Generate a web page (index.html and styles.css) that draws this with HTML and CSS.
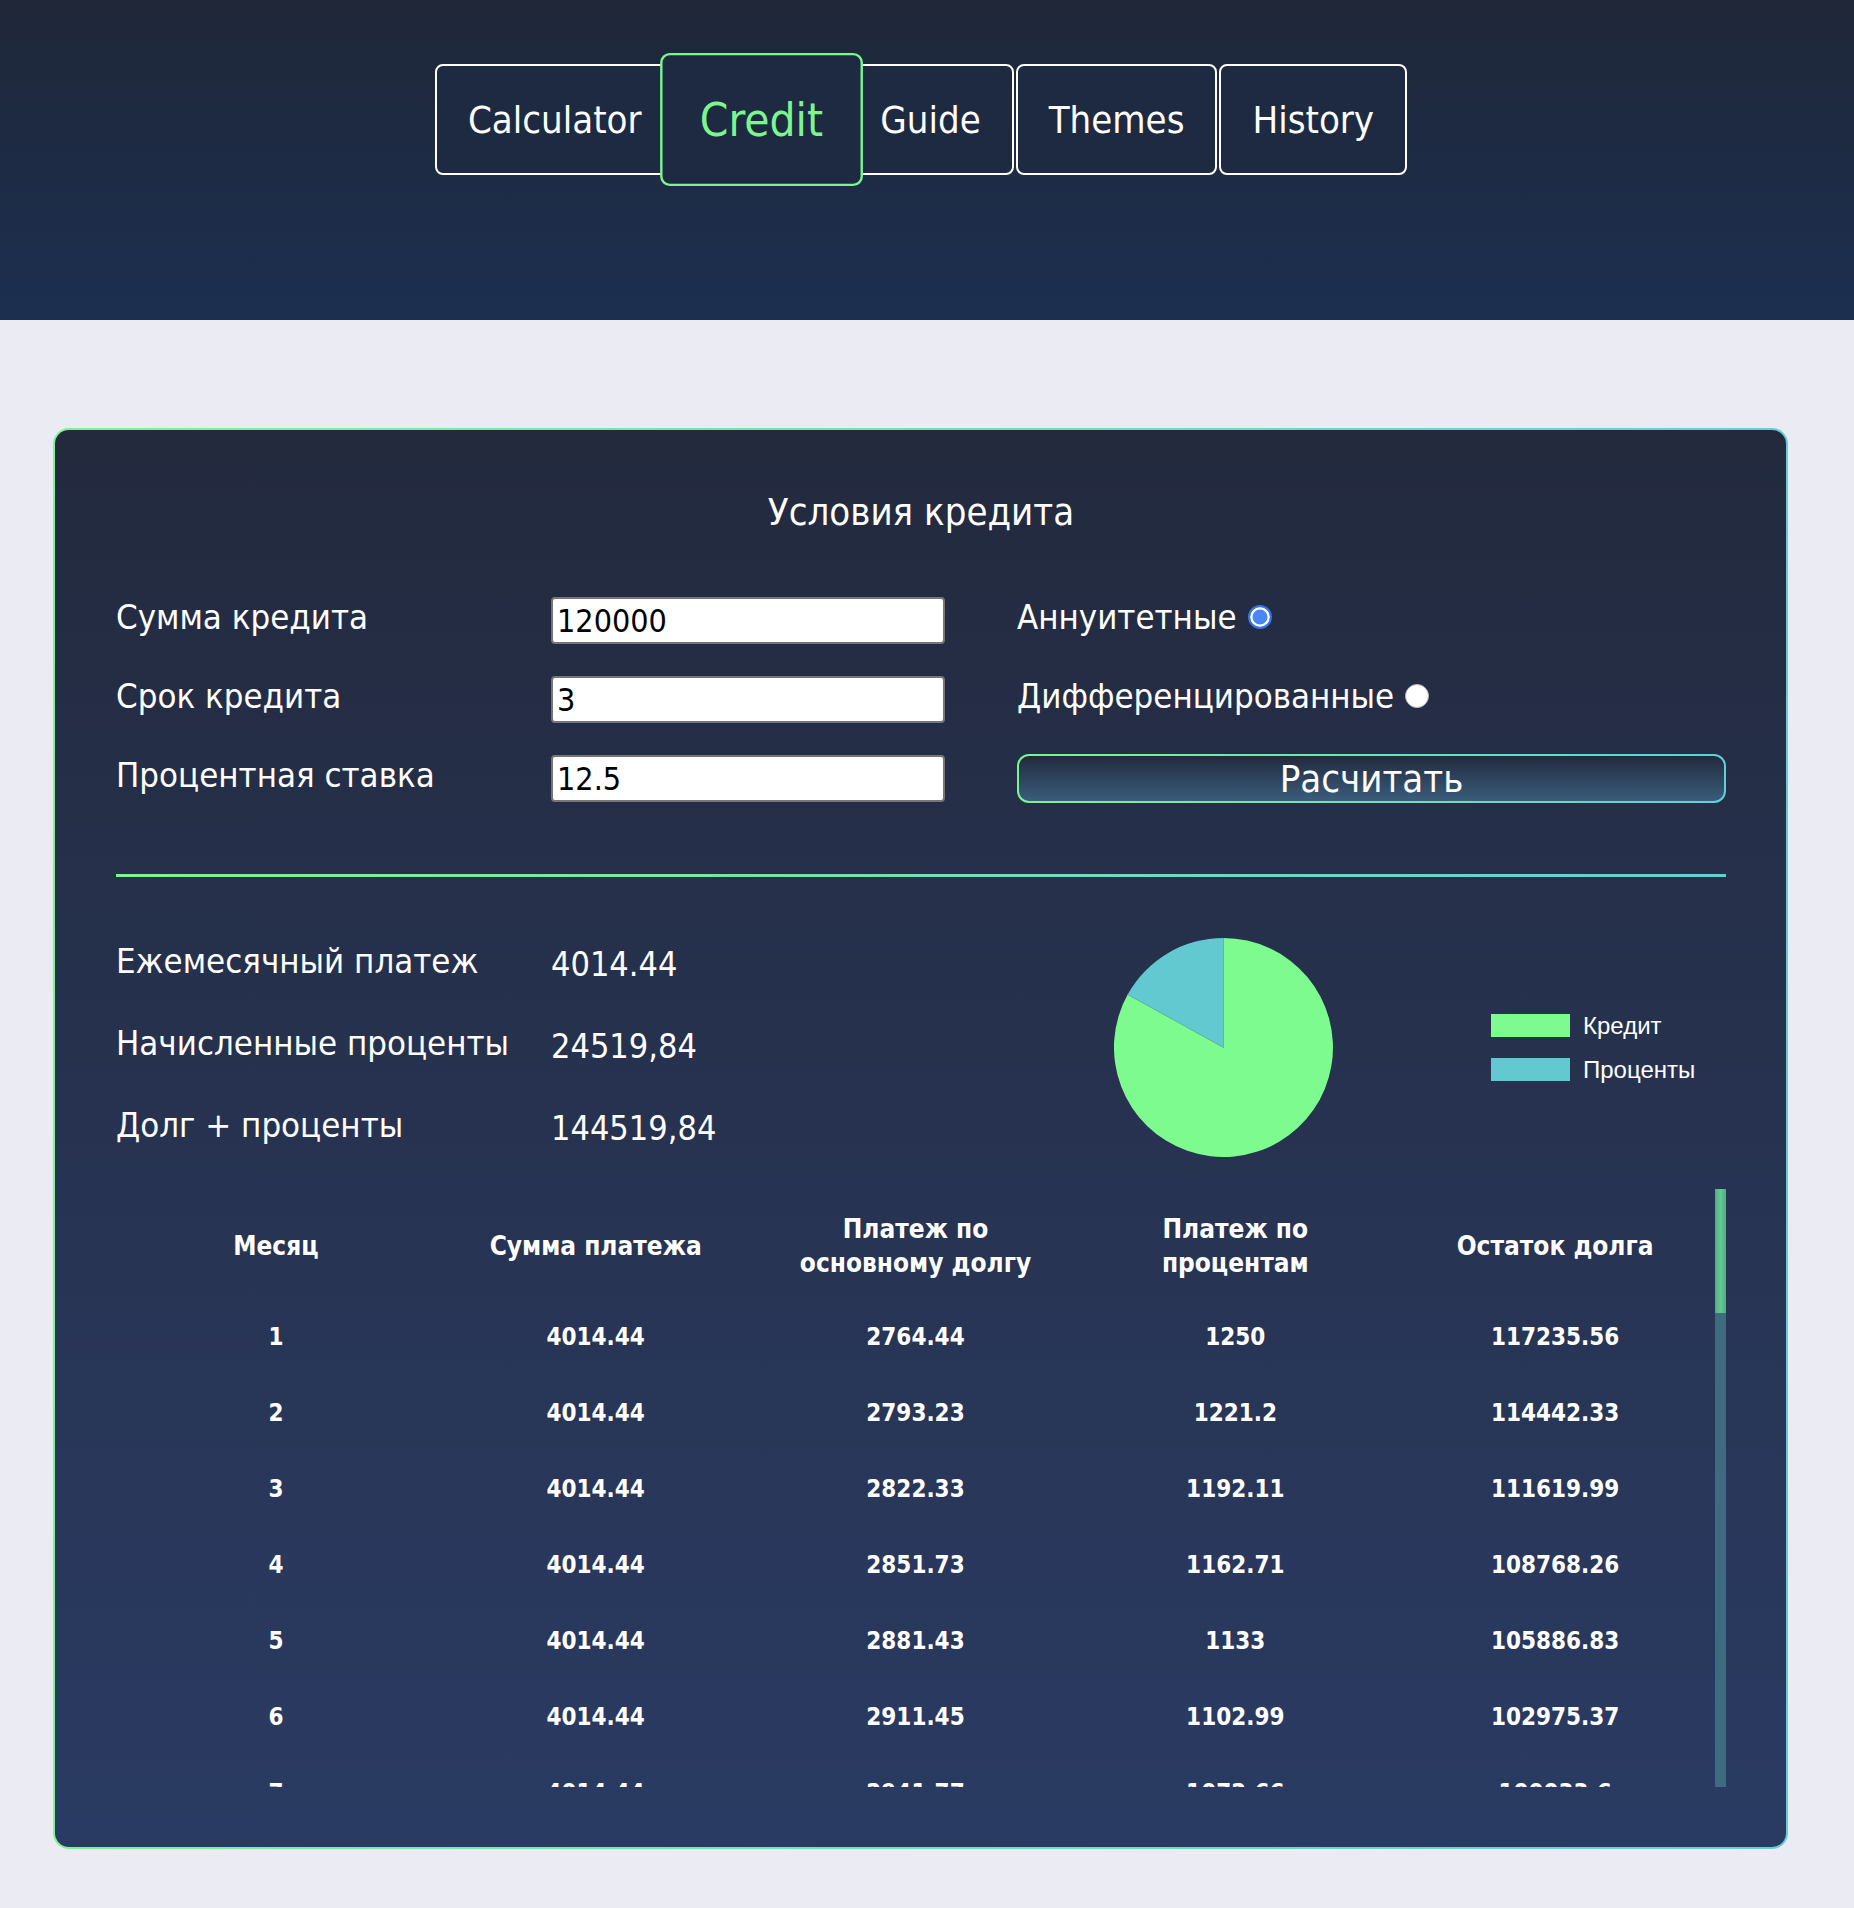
FILE: index.html
```html
<!DOCTYPE html>
<html lang="ru">
<head>
<meta charset="utf-8">
<title>Credit</title>
<link rel="stylesheet" href="styles.css">
</head>
<body>
<header class="top">
  <nav class="nav">
    <div class="nav-btn">Calculator</div>
    <div class="nav-btn active">Credit</div>
    <div class="nav-btn">Guide</div>
    <div class="nav-btn">Themes</div>
    <div class="nav-btn">History</div>
  </nav>
</header>
<main class="card">
  <h2 class="title">Условия кредита</h2>
  <div class="form">
    <div class="label form-label">Сумма кредита</div>
    <input class="field" type="text" value="120000">
    <label class="opt">Аннуитетные <span class="radio checked"></span></label>
    <div class="label form-label">Срок кредита</div>
    <input class="field" type="text" value="3">
    <label class="opt">Дифференцированные <span class="radio"></span></label>
    <div class="label form-label">Процентная ставка</div>
    <input class="field" type="text" value="12.5">
    <button class="calc">Расчитать</button>
  </div>
  <div class="divider"></div>
  <section class="results">
    <div class="stats">
      <div class="label">Ежемесячный платеж</div>
      <div class="value">4014.44</div>
      <div class="label">Начисленные проценты</div>
      <div class="value">24519,84</div>
      <div class="label">Долг + проценты</div>
      <div class="value">144519,84</div>
    </div>
    <div class="chart">
      <svg class="pie" width="219" height="219" viewBox="0 0 220 220">
        <path d="M110 110 L110 0 A110 110 0 1 1 13.7 56.8 Z" fill="#7dfb8e"/>
        <path d="M110 110 L13.7 56.8 A110 110 0 0 1 110 0 Z" fill="#63c9d1"/>
        <line x1="110" y1="110" x2="110" y2="0" stroke="#5fb8b0" stroke-width="0.8"/>
        <line x1="110" y1="110" x2="13.7" y2="56.8" stroke="#5fb8b0" stroke-width="0.8"/>
      </svg>
      <div class="legend">
        <div class="legend-item"><span class="swatch swatch-credit"></span>Кредит</div>
        <div class="legend-item"><span class="swatch swatch-interest"></span>Проценты</div>
      </div>
    </div>
  </section>
  <div class="table-box">
    <div class="table-clip">
      <table class="schedule">
        <thead>
          <tr>
            <th>Месяц</th>
            <th>Сумма платежа</th>
            <th>Платеж по<br>основному долгу</th>
            <th>Платеж по<br>процентам</th>
            <th>Остаток долга</th>
          </tr>
        </thead>
        <tbody id="rows">
          <tr><td>1</td><td>4014.44</td><td>2764.44</td><td>1250</td><td>117235.56</td></tr>
          <tr><td>2</td><td>4014.44</td><td>2793.23</td><td>1221.2</td><td>114442.33</td></tr>
          <tr><td>3</td><td>4014.44</td><td>2822.33</td><td>1192.11</td><td>111619.99</td></tr>
          <tr><td>4</td><td>4014.44</td><td>2851.73</td><td>1162.71</td><td>108768.26</td></tr>
          <tr><td>5</td><td>4014.44</td><td>2881.43</td><td>1133</td><td>105886.83</td></tr>
          <tr><td>6</td><td>4014.44</td><td>2911.45</td><td>1102.99</td><td>102975.37</td></tr>
          <tr><td>7</td><td>4014.44</td><td>2941.77</td><td>1072.66</td><td>100033.6</td></tr>
        </tbody>
      </table>
    </div>
    <div class="scrollbar"><div class="thumb"></div></div>
  </div>
</main>
<script src="script.js"></script>
</body>
</html>
```
FILE: styles.css
```css
* { box-sizing: border-box; }
html, body { margin: 0; padding: 0; }
body {
  background: #ebebf4;
  font-family: "DejaVu Sans Condensed", "DejaVu Sans", sans-serif;
  font-stretch: semi-condensed;
  color: #fff;
  min-height: 1908px;
}
.top {
  height: 320px;
  background: linear-gradient(180deg, #1f2738 0%, #1c2f50 100%);
  padding: 64px 12px 0 0;
}
.nav {
  display: flex;
  justify-content: center;
  gap: 2px;
}
.nav-btn {
  height: 111px;
  padding: 0 31px;
  border: 2px solid #fff;
  border-radius: 8px;
  background: #1d2a41;
  color: #fff;
  font-size: 38px;
  display: flex;
  align-items: center;
}
.nav-btn.active {
  color: #7cf58f;
  border-color: #7cf58f;
  transform: scale(1.2);
  position: relative;
  z-index: 1;
}
.card {
  margin: 108px 66px 0 53px;
  border: 2px solid transparent;
  border-radius: 16px;
  background:
    linear-gradient(180deg, #232a3e 0%, #2a3b63 100%) padding-box,
    linear-gradient(90deg, #7cf58f 0%, #62cfd8 100%) border-box;
  padding: 58px 60px 60px 61px;
}
.title {
  margin: 0 0 60px;
  text-align: center;
  font-size: 38px;
  line-height: 49px;
  font-weight: normal;
}
.form {
  display: grid;
  grid-template-columns: 363px 394px 1fr;
  column-gap: 72px;
  row-gap: 32px;
  grid-auto-rows: 47px;
  align-items: center;
}
.label {
  font-size: 34.5px;
  line-height: 40px;
  white-space: nowrap;
}
.form-label {
  padding-bottom: 7px;
}
.field {
  width: 100%;
  height: 47px;
  border: 2px solid #767676;
  border-radius: 4px;
  background: #fff;
  color: #000;
  padding: 0 4px;
  font-family: inherit;
  font-stretch: semi-condensed;
  font-size: 32px;
}
.opt {
  display: flex;
  align-items: center;
  font-size: 34.5px;
  line-height: 40px;
  padding-bottom: 7px;
}
.radio {
  display: inline-block;
  flex: none;
  width: 24px;
  height: 24px;
  margin-left: 11px;
  border-radius: 50%;
  background: #fff;
  border: 1px solid #b8b8b8;
}
.radio.checked {
  background: #4a86f7;
  border: 2px solid #3473ee;
  box-shadow: inset 0 0 0 2.5px #fff;
}
.calc {
  height: 49px;
  width: 100%;
  border: 2px solid transparent;
  border-radius: 12px;
  background:
    linear-gradient(180deg, #222a3e 0%, #3a5d7c 100%) padding-box,
    linear-gradient(90deg, #7cf58f 0%, #62cfd8 100%) border-box;
  color: #fff;
  font-family: inherit;
  font-stretch: semi-condensed;
  font-size: 38px;
  line-height: 1;
  padding: 0;
}
.divider {
  height: 3px;
  margin-top: 72px;
  background: linear-gradient(90deg, #7cf58f 0%, #62cfd8 100%);
}
.results {
  display: flex;
  margin-top: 43px;
}
.stats {
  width: 901px;
  display: grid;
  grid-template-columns: 435px 1fr;
  grid-auto-rows: 82px;
  align-items: center;
}
.value {
  font-size: 34px;
  line-height: 40px;
  padding-top: 6px;
}
.chart {
  flex: 1;
  display: flex;
  align-items: flex-start;
}
.pie {
  display: block;
  margin-left: 97px;
  margin-top: 18px;
}
.legend {
  margin-left: 158px;
  margin-top: 94px;
  display: flex;
  flex-direction: column;
  gap: 21px;
}
.legend-item {
  display: flex;
  align-items: center;
  gap: 13px;
  height: 23px;
  font-family: "Liberation Sans", Arial, sans-serif;
  font-stretch: normal;
  font-size: 24px;
  color: #fff;
}
.swatch {
  display: block;
  width: 79px;
  height: 23px;
}
.swatch-credit { background: #7dfb8e; }
.swatch-interest { background: #63c9d1; }
.table-box {
  margin-top: 23px;
  height: 598px;
  display: flex;
}
.table-clip {
  flex: 1;
  overflow: hidden;
}
.schedule {
  width: 100%;
  border-collapse: collapse;
  table-layout: fixed;
}
.schedule th {
  font-size: 26px;
  font-weight: bold;
  line-height: 34px;
  padding: 23px 6px 19px;
  text-align: center;
  vertical-align: middle;
}
.schedule td {
  font-size: 24px;
  font-weight: bold;
  line-height: 32px;
  padding: 22px 6px;
  text-align: center;
}
.scrollbar {
  width: 11px;
  background: #3d6c80;
}
.thumb {
  height: 124px;
  background: linear-gradient(90deg, #52ad82 0%, #63c994 50%, #52ad82 100%);
}
```
FILE: script.js
```js
(function () {
  var n = 36, r = 0.125 / 12, P = 120000;
  var pay = P * r / (1 - Math.pow(1 + r, -n));
  var rest = 100033.6;
  function fmt(v) { return String(Math.round(v * 100) / 100); }
  var body = document.getElementById('rows');
  var html = '';
  for (var i = 8; i <= n; i++) {
    var interest = rest * r;
    var principal = pay - interest;
    rest -= principal;
    html += '<tr><td>' + i + '</td><td>' + fmt(pay) + '</td><td>' + fmt(principal) +
      '</td><td>' + fmt(interest) + '</td><td>' + fmt(Math.abs(rest)) + '</td></tr>';
  }
  body.insertAdjacentHTML('beforeend', html);
})();
```
